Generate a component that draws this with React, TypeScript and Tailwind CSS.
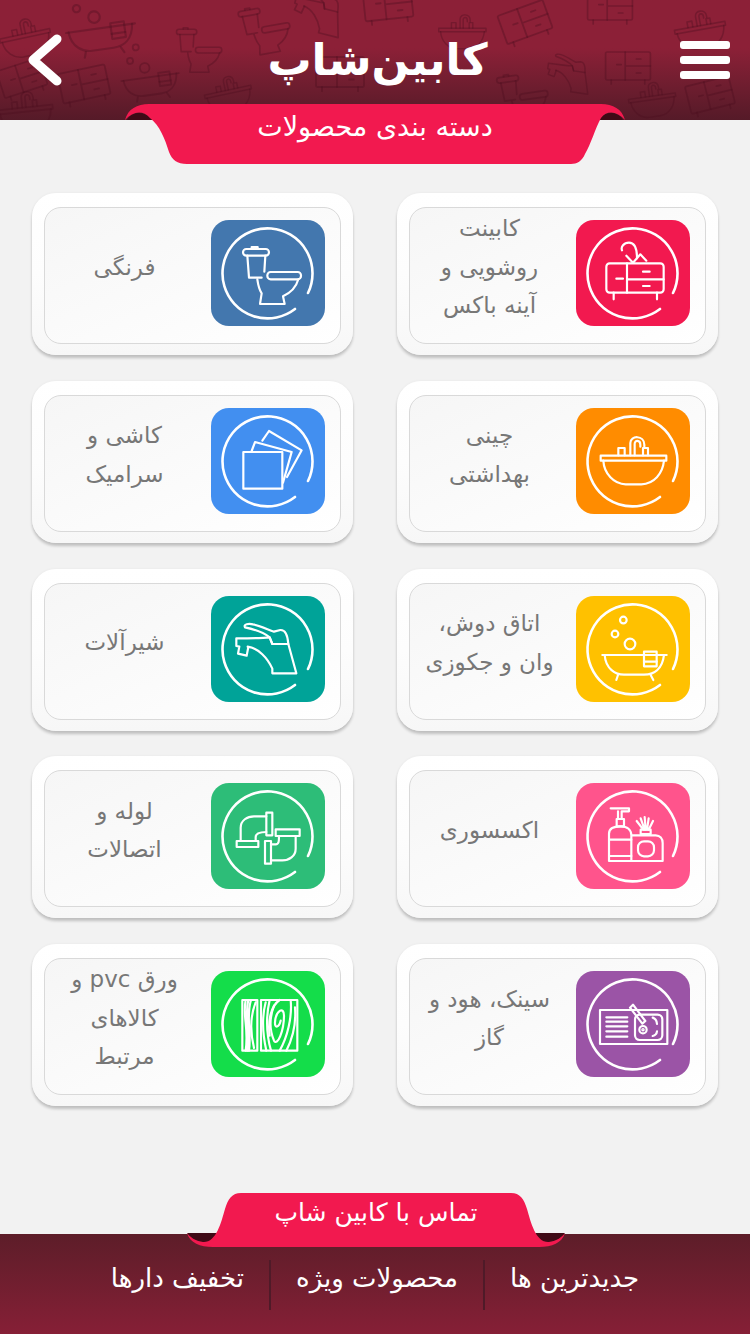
import type { ReactNode } from "react";

type Glyph = { cx: number; cy: number; draw: ReactNode };

const vanity: Glyph = {
  cx: 740,
  cy: 266,
  draw: (
    <>
      <rect x="660" y="237" width="172" height="88" rx="10" />
      <path d="M722 237V325M722 285H832M690 283H710M770 262H790M770 305H790M682 325V345M812 325V345" />
      <path d="M752 222C752 205 750 175 728 175C712 175 703 188 707 198" />
      <path d="M720 214L740 235L762 210L780 229" />
    </>
  ),
};

const toilet: Glyph = {
  cx: 227,
  cy: 207,
  draw: (
    <>
      <rect x="152" y="135" width="78" height="20" rx="10" />
      <path d="M178 134V129H196V134" />
      <path d="M165 155L170 221H208M219 155L216 203" />
      <rect x="225" y="204" width="101" height="22" rx="10" />
      <path d="M195 226C198 248 204 262 208 268L203 300H277L272 277C296 266 312 248 318 226" />
    </>
  ),
};

const basin: Glyph = {
  cx: 217,
  cy: 197,
  draw: (
    <>
      <rect x="120" y="181" width="197" height="15" />
      <path d="M128 196C130 235 160 266 195 267H242C280 266 306 235 310 196" />
      <path d="M209 180V143C209 119 251 119 251 148V154M222 180V146C222 133 239 133 239 148V154" />
      <path d="M173 180V158H192V180M247 180V158H262V180" />
    </>
  ),
};

const tiles: Glyph = {
  cx: 227,
  cy: 197,
  draw: (
    <>
      <rect x="153" y="170" width="117" height="110" />
      <path d="M178 167L188 140L298 170L272 262" />
      <path d="M210 136L230 107L328 165L284 245" />
    </>
  ),
};

const bath: Glyph = {
  cx: 217,
  cy: 190,
  draw: (
    <>
      <path d="M125 208H318" />
      <path d="M132 208C135 250 165 267 190 267H250C280 267 305 250 310 208" />
      <path d="M172 268L167 283M270 268L278 283" />
      <rect x="250" y="198" width="38" height="44" />
      <path d="M250 228H288" />
      <circle cx="188" cy="103" r="10" />
      <circle cx="163" cy="145" r="10" />
      <circle cx="208" cy="175" r="16" />
    </>
  ),
};

const tap: Glyph = {
  cx: 227,
  cy: 187,
  draw: (
    <>
      <path d="M158 122C152 112 170 110 182 113C205 118 225 128 245 135L264 130C280 129 286 145 288 172H240L232 152C212 136 182 127 158 122Z" />
      <path d="M288 172L312 260H240V246C226 214 198 184 166 180" />
      <path d="M240 172L232 152C205 155 165 155 132 155V178L141 180L137 201L163 207L168 181" />
    </>
  ),
};

const bottles: Glyph = {
  cx: 217,
  cy: 197,
  draw: (
    <>
      <path d="M150 114H205V123H183V146M172 123V146" />
      <rect x="168" y="146" width="22" height="22" />
      <path d="M145 190C145 175 160 168 180 168C200 168 212 178 212 195V272H145Z" />
      <path d="M145 208H212M145 257H212" />
      <path d="M214 195H285C298 195 306 205 306 218V272H214" />
      <rect x="232" y="213" width="48" height="45" rx="18" />
      <rect x="240" y="178" width="30" height="13" />
      <path d="M248 178L228 152M252 178L240 144M255 178L252 140M259 178L264 144M264 178L277 152" />
    </>
  ),
};

const pipes: Glyph = {
  cx: 227,
  cy: 197,
  draw: (
    <>
      <rect x="133" y="212" width="65" height="18" />
      <rect x="222" y="127" width="18" height="68" />
      <path d="M145 212V172C145 150 165 138 185 138H222M190 212V200C190 190 200 185 222 185" />
      <rect x="250" y="177" width="72" height="20" />
      <rect x="218" y="212" width="18" height="68" />
      <path d="M236 222H250C260 222 260 212 260 197M310 197V235C310 258 290 270 270 270H236" />
    </>
  ),
};

const sink: Glyph = {
  cx: 217,
  cy: 190,
  draw: (
    <>
      <rect x="118" y="148" width="202" height="102" />
      <rect x="223" y="162" width="82" height="76" rx="14" />
      <path d="M137 170H200M137 183H200M137 197H200M137 212H200M137 228H200" />
      <path d="M208 141L217 132L254 181L245 189Z" />
      <circle cx="247" cy="207" r="11" />
      <circle cx="247" cy="207" r="2" />
      <path d="M276 171C284 173 288 178 289 190M289 212C288 220 284 224 276 226" />
    </>
  ),
};

const wood: Glyph = {
  cx: 227,
  cy: 190,
  draw: (
    <>
      <rect x="150" y="118" width="45" height="152" />
      <rect x="206" y="118" width="109" height="152" />
      <path d="M160 118C150 170 170 200 160 270M176 118C160 170 178 220 170 270M190 125C176 160 170 200 185 262M168 118C155 170 174 210 165 270" />
      <path d="M232 118C220 170 222 220 236 270M245 135C232 170 232 210 245 240C255 258 275 210 275 165C275 135 250 150 248 185C247 205 260 200 265 180" />
      <path d="M295 118C300 170 285 230 262 270M308 140C312 190 300 235 282 270M220 125C208 170 212 225 222 270M262 118C236 135 226 180 232 225" />
    </>
  ),
};

type Category = { lines: string[]; color: string; glyph: Glyph };

const categories: Category[] = [
  { lines: ["کابینت", "روشویی و", "آینه باکس"], color: "bg-[#f2194f]", glyph: vanity },
  { lines: ["فرنگی"], color: "bg-[#4377ae]", glyph: toilet },
  { lines: ["چینی", "بهداشتی"], color: "bg-[#ff8c00]", glyph: basin },
  { lines: ["کاشی و", "سرامیک"], color: "bg-[#428ff0]", glyph: tiles },
  { lines: ["اتاق دوش،", "وان و جکوزی"], color: "bg-[#ffc100]", glyph: bath },
  { lines: ["شیرآلات"], color: "bg-[#00a398]", glyph: tap },
  { lines: ["اکسسوری"], color: "bg-[#ff548c]", glyph: bottles },
  { lines: ["لوله و", "اتصالات"], color: "bg-[#2dbd78]", glyph: pipes },
  { lines: ["سینک، هود و", "گاز"], color: "bg-[#9b54a6]", glyph: sink },
  { lines: ["ورق pvc و", "کالاهای", "مرتبط"], color: "bg-[#14dd4a]", glyph: wood },
];

const cabinet: Glyph = {
  cx: 0,
  cy: 0,
  draw: (
    <>
      <rect x="-80" y="-50" width="160" height="100" rx="6" />
      <path d="M-10 -50V50M-10 0H80M-60 50V64M60 50V64M-40 -5H-24M30 -25H46M30 25H46" />
    </>
  ),
};

const patternItems: { glyph: Glyph; x: number; y: number; r: number; s: number }[] = [
  { glyph: bath, x: 98, y: 22, r: -8, s: 0.36 },
  { glyph: basin, x: 25, y: 38, r: -12, s: 0.26 },
  { glyph: cabinet, x: 22, y: 78, r: -18, s: 0.28 },
  { glyph: toilet, x: 196, y: 48, r: 0, s: 0.26 },
  { glyph: toilet, x: 262, y: 28, r: -10, s: 0.28 },
  { glyph: tap, x: 320, y: 12, r: 14, s: 0.28 },
  { glyph: cabinet, x: 388, y: 4, r: -6, s: 0.3 },
  { glyph: cabinet, x: 525, y: 22, r: -20, s: 0.3 },
  { glyph: cabinet, x: 610, y: 6, r: 0, s: 0.28 },
  { glyph: cabinet, x: 628, y: 66, r: 0, s: 0.28 },
  { glyph: tap, x: 570, y: 74, r: 8, s: 0.24 },
  { glyph: bath, x: 148, y: 72, r: -8, s: 0.3 },
  { glyph: cabinet, x: 84, y: 84, r: -12, s: 0.3 },
  { glyph: basin, x: 228, y: 94, r: -12, s: 0.24 },
  { glyph: toilet, x: 520, y: 95, r: -8, s: 0.28 },
  { glyph: cabinet, x: 340, y: 72, r: 0, s: 0.3 },
  { glyph: basin, x: 700, y: 30, r: -10, s: 0.26 },
  { glyph: cabinet, x: 710, y: 95, r: -14, s: 0.28 },
  { glyph: basin, x: 25, y: 112, r: -6, s: 0.28 },
  { glyph: basin, x: 462, y: 32, r: 0, s: 0.24 },
  { glyph: basin, x: 652, y: 100, r: -8, s: 0.24 },
];

function CategoryIcon({ glyph }: { glyph: Glyph }) {
  return (
    <svg viewBox="0 0 114 106" className="h-full w-full" fill="none" stroke="#fff" strokeLinecap="round" strokeLinejoin="round">
      <path d="M84 89A45 45 0 1 1 97 73" strokeWidth="2.6" />
      <g transform={`translate(57 53) scale(0.3333) translate(${-glyph.cx} ${-glyph.cy})`} strokeWidth="6.5">
        {glyph.draw}
      </g>
    </svg>
  );
}

function CategoryCard({ item }: { item: Category }) {
  return (
    <div className="h-[162px] rounded-[24px] bg-gradient-to-b from-white via-[#fdfdfd] to-[#f7f7f7] px-3 pb-[11px] pt-[14px] shadow-[0_3px_3px_rgba(0,0,0,0.2),0_0_3px_rgba(0,0,0,0.05)]">
      <div className="flex h-full items-center rounded-[17px] border border-[#d9d9d9] bg-gradient-to-br from-[#f6f6f6] to-white pb-[5px] pr-[15px]">
        <div className={`h-[106px] w-[114px] flex-none rounded-[18px] ${item.color}`}>
          <CategoryIcon glyph={item.glyph} />
        </div>
        <div className="flex-1 pb-3 pr-[7px] text-center text-[23px] leading-[38.5px] text-[#777]">
          {item.lines.map((line) => (
            <div key={line}>{line}</div>
          ))}
        </div>
      </div>
    </div>
  );
}

export default function App() {
  return (
    <div
      dir="rtl"
      className="flex h-[1334px] w-[750px] flex-col overflow-hidden bg-[#f2f2f2] font-['DejaVu_Sans',sans-serif]"
    >
      <header dir="ltr" className="relative flex h-[120px] flex-none items-center justify-between bg-gradient-to-b from-[#8c2037] from-40% to-[#551a28] pl-[27px] pr-5">
        <svg viewBox="0 0 750 120" className="absolute inset-0 h-full w-full" fill="none" stroke="#4a0f1e" strokeOpacity="0.36" strokeLinecap="round" strokeLinejoin="round">
          {patternItems.map((p, i) => (
            <g key={i} transform={`translate(${p.x} ${p.y}) rotate(${p.r}) scale(${p.s}) translate(${-p.glyph.cx} ${-p.glyph.cy})`} strokeWidth="6">
              {p.glyph.draw}
            </g>
          ))}
        </svg>
        <svg viewBox="0 0 36 52" className="relative h-[52px] w-[36px]" fill="none" stroke="#fff" strokeWidth="9" strokeLinecap="round" strokeLinejoin="round">
          <path d="M30 5L6 26L30 47" />
        </svg>
        <div dir="rtl" className="relative ml-3 text-[44px] font-bold leading-none text-white">
          کابین‌شاپ
        </div>
        <div className="relative flex w-[50px] flex-col gap-[7px]">
          <div className="h-[8px] rounded-[3px] bg-white" />
          <div className="h-[8px] rounded-[3px] bg-white" />
          <div className="h-[8px] rounded-[3px] bg-white" />
        </div>
        <div className="absolute left-[125px] top-[104px] flex h-[60px] w-[500px] justify-center">
          <svg viewBox="0 0 500 60" className="absolute inset-0 h-full w-full">
            <path d="M2 16C6 8 18 6 25 14L28 16Z M498 16C494 8 482 6 475 14L472 16Z" fill="#3f0a16" />
            <path d="M0 16C3 5 12 0 24 0H476C488 0 497 5 500 16C492 7 482 6 476 14C470 25 466 40 460 50C457 57 452 60 446 60H62C52 60 47 56 44 48C40 35 35 22 25 14C18 6 8 7 0 16Z" fill="#f2194f" />
          </svg>
          <div dir="rtl" className="relative pt-[3px] text-[27px] leading-[40px] text-white">دسته بندی محصولات</div>
        </div>
      </header>

      <main className="grid grid-cols-2 gap-x-11 gap-y-[25.75px] px-8 pt-[73px]">
        {categories.map((item) => (
          <CategoryCard key={item.lines.join(" ")} item={item} />
        ))}
      </main>

      <footer className="relative mt-auto flex h-[100px] flex-none justify-center bg-gradient-to-b from-[#5d1d29] to-[#861f36] pt-[26px]">
        <div className="absolute left-[187px] top-[-41px] flex h-[54px] w-[378px] justify-center">
          <svg viewBox="0 0 378 54" className="absolute inset-0 h-full w-full">
            <path d="M0 40H30C26 48 20 49 16 49C8 48 3 44 0 40Z M378 40H348C352 48 358 49 362 49C370 48 375 44 378 40Z" fill="#3f0a16" />
            <path d="M54 0H324C333 0 337 6 340 16C344 30 349 50 362 49C370 48 375 44 378 40C375 50 365 54 352 54H26C13 54 3 50 0 40C3 44 8 48 16 49C29 50 34 30 38 16C41 6 45 0 54 0Z" fill="#f2194f" />
          </svg>
          <div className="relative pt-[1px] text-[25px] leading-[38px] text-white">تماس با کابین شاپ</div>
        </div>
        <nav className="flex h-[50px] items-center text-[26px] text-white">
          <div className="flex h-full items-center border-l-2 border-[#4f1a28] px-[25px] pb-[13px]">جدیدترین ها</div>
          <div className="flex h-full items-center border-l-2 border-[#4f1a28] px-[25px] pb-[13px]">محصولات ویژه</div>
          <div className="flex h-full items-center px-[25px] pb-[13px]">تخفیف دارها</div>
        </nav>
      </footer>
    </div>
  );
}
